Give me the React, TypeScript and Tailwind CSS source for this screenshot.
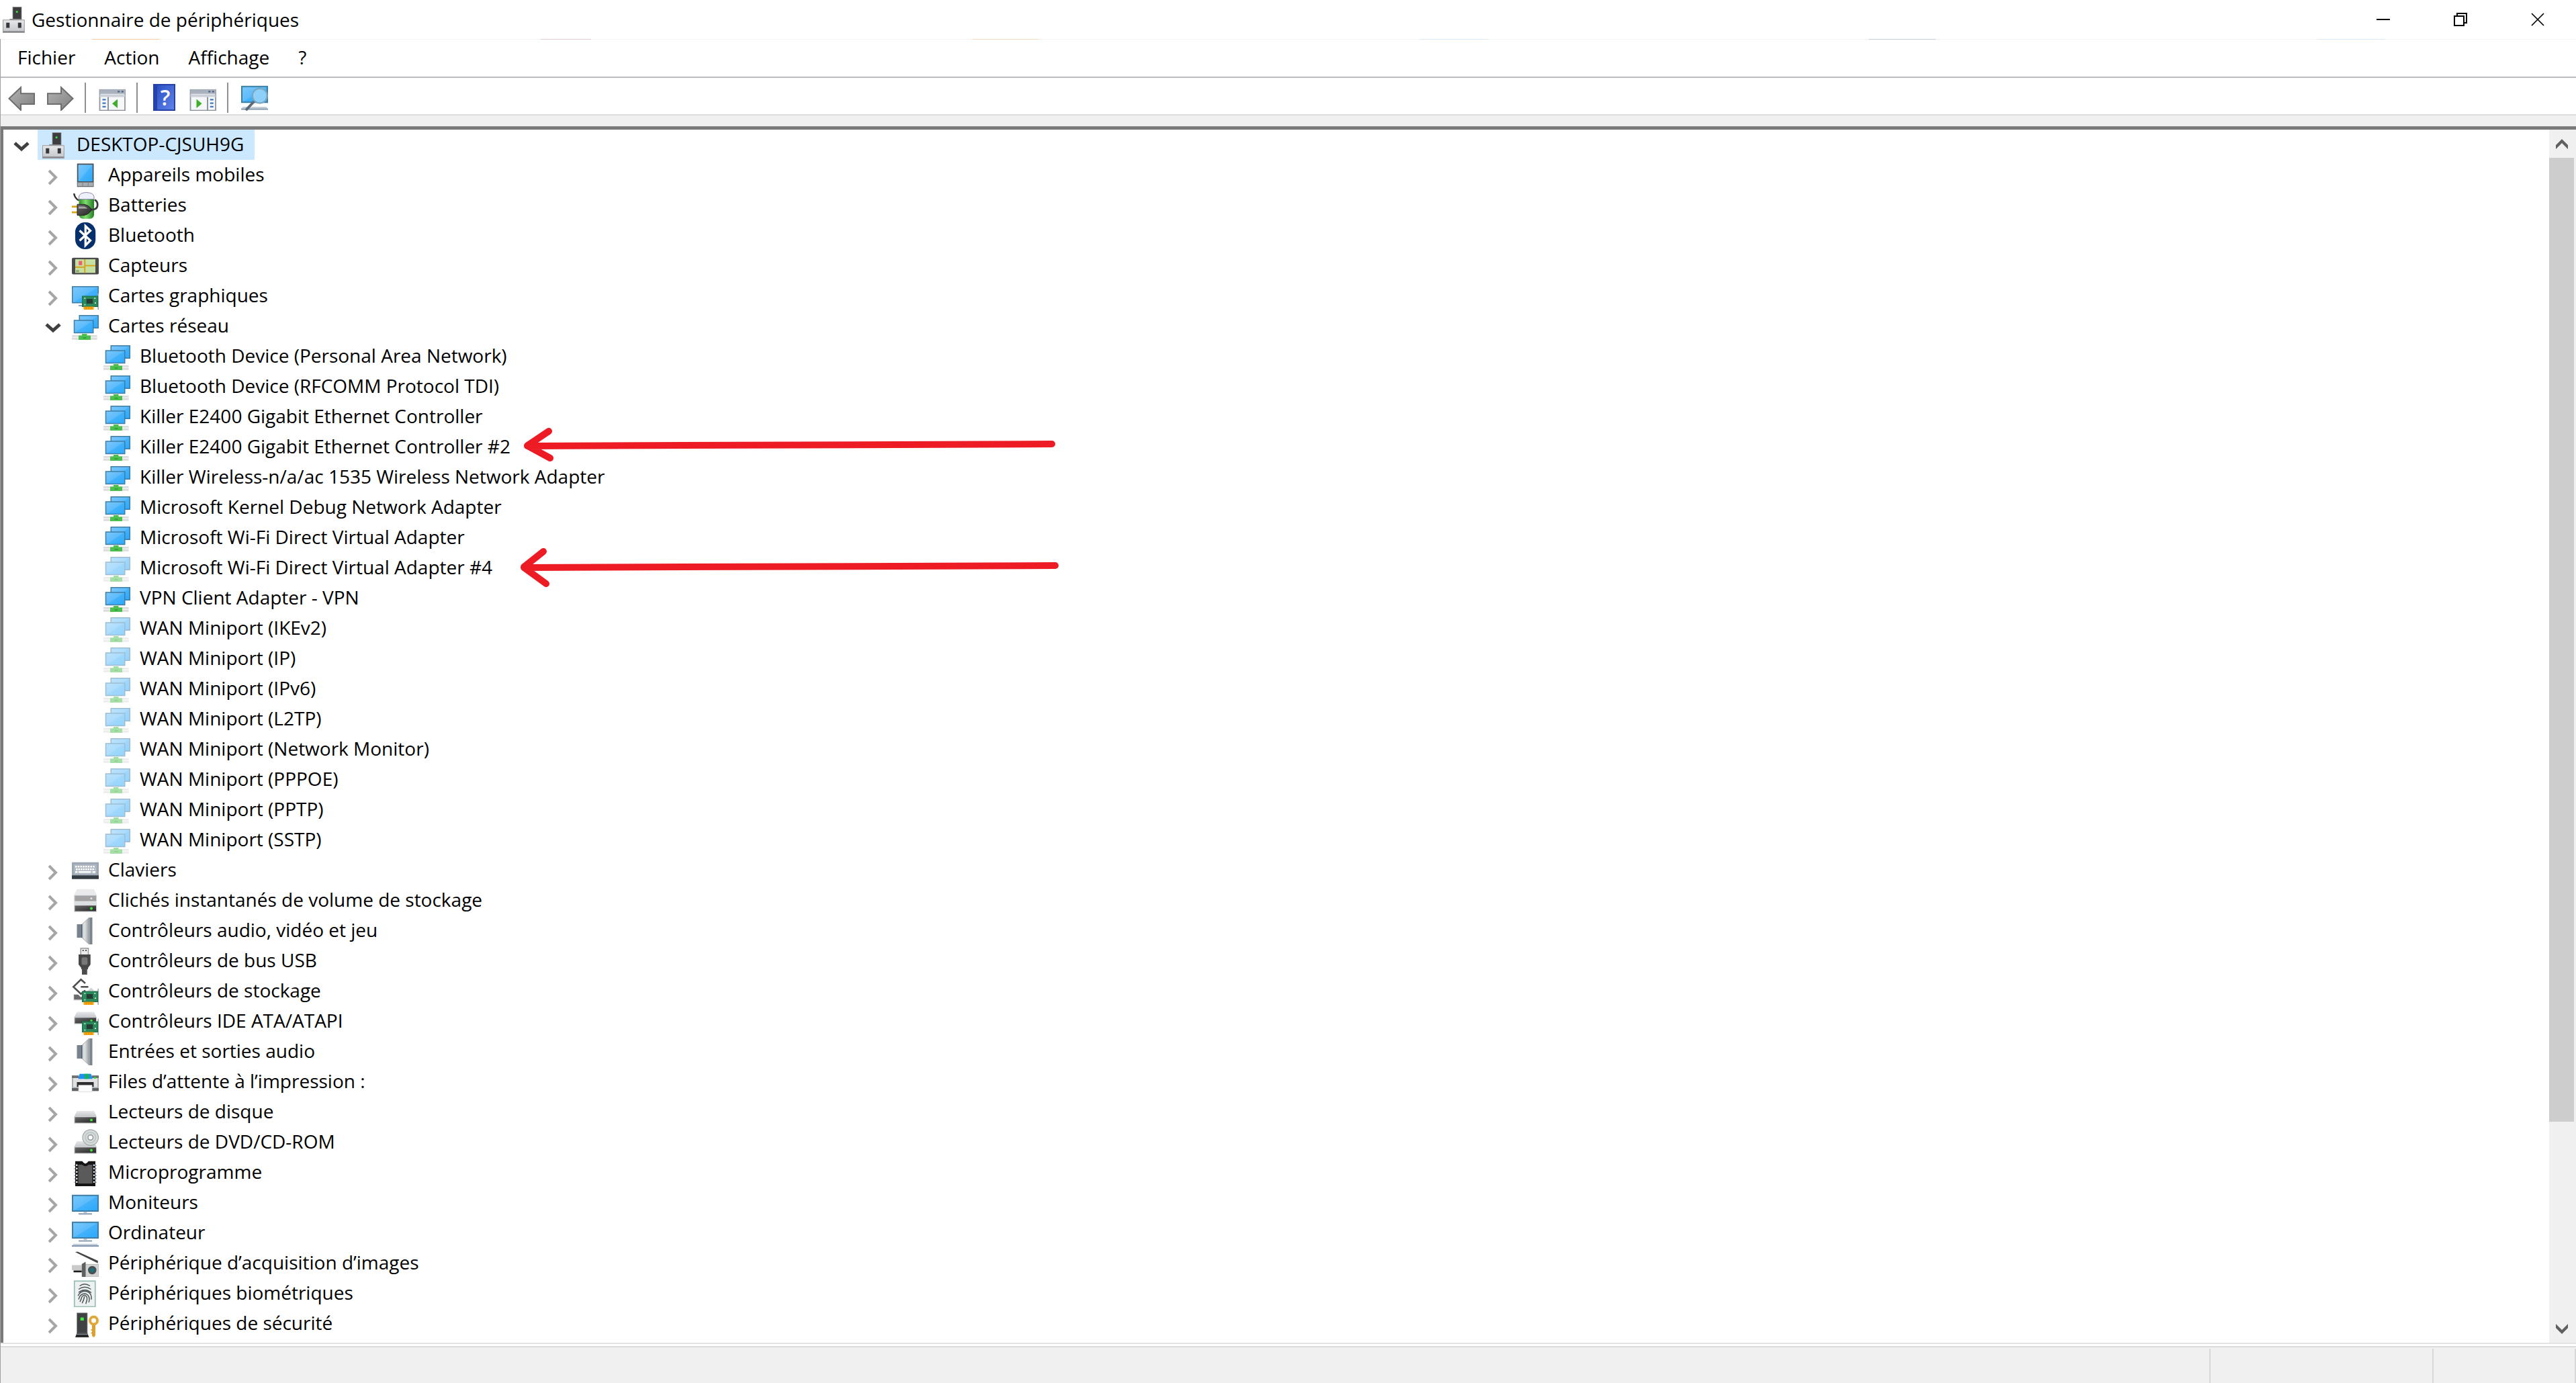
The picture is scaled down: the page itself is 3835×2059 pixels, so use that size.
import { useState } from "react";
import type { ReactNode } from "react";

type IconName =
  | "computer"
  | "mobile"
  | "battery"
  | "bluetooth"
  | "sensor"
  | "graphics"
  | "network"
  | "keyboard"
  | "volume"
  | "audio"
  | "usb"
  | "storage"
  | "ide"
  | "printer"
  | "disk"
  | "dvd"
  | "firmware"
  | "monitor"
  | "desktop"
  | "imaging"
  | "biometric"
  | "security";

interface Device {
  label: string;
  disabled?: boolean;
}

interface Category {
  label: string;
  icon: IconName;
  devices?: Device[];
}

const categories: Category[] = [
  { label: "Appareils mobiles", icon: "mobile" },
  { label: "Batteries", icon: "battery" },
  { label: "Bluetooth", icon: "bluetooth" },
  { label: "Capteurs", icon: "sensor" },
  { label: "Cartes graphiques", icon: "graphics" },
  {
    label: "Cartes réseau",
    icon: "network",
    devices: [
      { label: "Bluetooth Device (Personal Area Network)" },
      { label: "Bluetooth Device (RFCOMM Protocol TDI)" },
      { label: "Killer E2400 Gigabit Ethernet Controller" },
      { label: "Killer E2400 Gigabit Ethernet Controller #2" },
      { label: "Killer Wireless-n/a/ac 1535 Wireless Network Adapter" },
      { label: "Microsoft Kernel Debug Network Adapter" },
      { label: "Microsoft Wi-Fi Direct Virtual Adapter" },
      { label: "Microsoft Wi-Fi Direct Virtual Adapter #4", disabled: true },
      { label: "VPN Client Adapter - VPN" },
      { label: "WAN Miniport (IKEv2)", disabled: true },
      { label: "WAN Miniport (IP)", disabled: true },
      { label: "WAN Miniport (IPv6)", disabled: true },
      { label: "WAN Miniport (L2TP)", disabled: true },
      { label: "WAN Miniport (Network Monitor)", disabled: true },
      { label: "WAN Miniport (PPPOE)", disabled: true },
      { label: "WAN Miniport (PPTP)", disabled: true },
      { label: "WAN Miniport (SSTP)", disabled: true },
    ],
  },
  { label: "Claviers", icon: "keyboard" },
  { label: "Clichés instantanés de volume de stockage", icon: "volume" },
  { label: "Contrôleurs audio, vidéo et jeu", icon: "audio" },
  { label: "Contrôleurs de bus USB", icon: "usb" },
  { label: "Contrôleurs de stockage", icon: "storage" },
  { label: "Contrôleurs IDE ATA/ATAPI", icon: "ide" },
  { label: "Entrées et sorties audio", icon: "audio" },
  { label: "Files d’attente à l’impression :", icon: "printer" },
  { label: "Lecteurs de disque", icon: "disk" },
  { label: "Lecteurs de DVD/CD-ROM", icon: "dvd" },
  { label: "Microprogramme", icon: "firmware" },
  { label: "Moniteurs", icon: "monitor" },
  { label: "Ordinateur", icon: "desktop" },
  { label: "Périphérique d’acquisition d’images", icon: "imaging" },
  { label: "Périphériques biométriques", icon: "biometric" },
  { label: "Périphériques de sécurité", icon: "security" },
];

const menus = ["Fichier", "Action", "Affichage", "?"];

// Green expansion card used by several categories
const card = (
  <>
    <path d="M15.7 6.3V16" stroke="#a5a9ad" strokeWidth="0.7" />
    <rect x="6.2" y="8" width="9.2" height="6.2" fill="#2b8a5c" stroke="#1d6a46" strokeWidth="0.4" />
    <rect x="8.7" y="9.6" width="3.8" height="2.8" fill="#273c35" />
    <path d="M7.4 9.2h.7M7.4 13h.7M13.3 9.2h.8M13.6 12h.8" stroke="#cfe9da" strokeWidth="0.7" />
    <rect x="7" y="14.2" width="6" height="1.8" fill="#f6a40c" />
    <path d="M8.5 14.2V16M10 14.2V16M11.5 14.2V16" stroke="#d98400" strokeWidth="0.3" />
  </>
);

const drive = (
  <>
    <path d="M3 7.2h10.2l1.6 3.5H1.3z" fill="url(#light)" />
    <rect x="1.3" y="10.7" width="13.5" height="4" fill="#c9ccce" />
    <rect x="1.8" y="10.9" width="12.6" height="3.3" fill="url(#dark)" />
    <circle cx="11.6" cy="12.6" r="0.8" fill="#3bea3b" />
  </>
);

const drawings: Record<IconName, ReactNode> = {
  computer: (
    <>
      <rect x="7.2" y="0.6" width="5.2" height="8" fill="#3d3d3f" stroke="#8e8e8e" strokeWidth="0.3" />
      <rect x="9.1" y="2.9" width="1.1" height="1.1" fill="#3fe03f" />
      <path d="M5.3 7.6h7v1h-7z" fill="#8a8a8c" />
      <rect x="1.4" y="8.3" width="12.7" height="7.5" fill="url(#light)" stroke="#9a9a9e" strokeWidth="0.4" />
      <path d="M1.4 15.2h12.7" stroke="#8d8d92" strokeWidth="0.9" />
      <rect x="3.3" y="9.9" width="2" height="3.1" fill="#35373a" />
      <rect x="10.3" y="9.9" width="2" height="3.1" fill="#35373a" />
    </>
  ),
  mobile: (
    <>
      <rect x="3.1" y="1" width="9.9" height="13.9" fill="#4b5054" />
      <rect x="3.8" y="1.7" width="8.5" height="9.9" fill="url(#screen)" />
      <rect x="3.4" y="12.2" width="9.3" height="2.3" fill="#a7adb1" />
      <path d="M6.4 12.2v2.3M9.7 12.2v2.3" stroke="#7b8185" strokeWidth="0.4" />
    </>
  ),
  battery: (
    <>
      <rect x="4.2" y="1.2" width="9" height="14.7" rx="2.5" fill="url(#green)" />
      <path d="M4.2 4.2V2.8Q4.4 .4 8.7.2q4.3.2 4.5 2.6v1.4z" fill="#eef0fa" stroke="#8d8aa8" strokeWidth="0.4" />
      <path d="M1.3.8q.2 2.6 2.8 4.2" fill="none" stroke="#333" strokeWidth="1" />
      <path d="M11 10.4h1.8q2.5-.5 2.5-2.8 0-2.3-1.8-3" fill="none" stroke="#3a3a3a" strokeWidth="1.1" />
      <path d="M0 8.6h3.2M0 12h3.2" stroke="#d8a810" strokeWidth="1.1" />
      <path d="M3.2 7.3h4q3.2.6 4.6 3.1-1.4 2.8-4.6 3.4h-4z" fill="url(#dark)" stroke="#222" strokeWidth="0.4" />
      <path d="M4 8.6h3.2q1.4.4 2.2 1.2H4z" fill="#a9a9a9" />
    </>
  ),
  bluetooth: (
    <>
      <rect x="2" y="0" width="12.1" height="16" rx="5.8" fill="#06306b" />
      <path d="M4.6 4.9 11 10.8 8.1 13.7V2.2L11 5 4.6 10.9" fill="none" stroke="#fff" strokeWidth="1.3" />
    </>
  ),
  sensor: (
    <>
      <rect x="0" y="3.1" width="16" height="9.9" rx="0.8" fill="#4a4a4a" />
      <rect x="2" y="4" width="12" height="8.1" fill="#c6dfa2" />
      <path d="M2 8.7h5.7M7.7 4v8.1M7.7 7.8H14" stroke="#d6a520" strokeWidth="0.8" />
      <rect x="4.1" y="5" width="2" height="2.5" fill="#ef5d6a" />
      <rect x="2.5" y="10.4" width="1.8" height="1.3" fill="#8fa67a" />
    </>
  ),
  graphics: (
    <>
      <rect x="0.3" y="2.3" width="15.4" height="9.6" fill="url(#screen)" stroke="#3d7da6" strokeWidth="0.6" />
      <path d="M4 13.6h3" stroke="#8fa5bd" strokeWidth="0.8" />
      {card}
    </>
  ),
  network: (
    <>
      <rect x="4.5" y="1.5" width="11.2" height="7.4" fill="url(#screen)" stroke="#3d7da6" strokeWidth="0.6" />
      <rect x="1.4" y="4.4" width="11.3" height="7.4" fill="url(#screen)" stroke="#3d7da6" strokeWidth="0.6" />
      <rect x="0" y="13.2" width="15" height="2.7" fill="#dcdcdc" />
      <path d="M0 14.5h15" stroke="#f2f2f2" strokeWidth="0.6" />
      <path d="M6 12.4h3v1h2.2v2.6H4v-2.6h2z" fill="#4cc04e" />
      <path d="M6.6 14.8h2" stroke="#2f9a3a" strokeWidth="0.7" />
    </>
  ),
  keyboard: (
    <>
      <rect x="0" y="3.1" width="16" height="8" fill="#9ba7b3" />
      <rect x="1.2" y="4.3" width="13.6" height="5.9" fill="#aeb8c2" />
      <path d="M2 5.7h12" stroke="#fff" strokeWidth="1" strokeDasharray="1 .5" />
      <path d="M2.4 7.3h11.4" stroke="#fff" strokeWidth="1" strokeDasharray="1 .4" />
      <path d="M2 8.9h1.4M4 8.9h7.4M12.2 8.9h1.8" stroke="#fff" strokeWidth="1" />
      <rect x="0" y="10.9" width="16" height="2.2" fill="#333c44" />
    </>
  ),
  volume: (
    <>
      <path d="M3 1.1h10.2l1.6 3.6H1.3z" fill="#e9eaeb" />
      <rect x="1.3" y="4.7" width="13.5" height="3.9" fill="#cfd0d1" />
      <rect x="1.8" y="5" width="12.6" height="3.2" fill="#a3a3a3" />
      <circle cx="11.6" cy="6.6" r="0.6" fill="#e4e4e4" />
      <path d="M1.3 8.6h13.5v2.3H1.3z" fill="#dcdfe1" />
      <rect x="1.3" y="10.7" width="13.5" height="4" fill="#c9ccce" />
      <rect x="1.8" y="10.9" width="12.6" height="3.3" fill="url(#dark)" />
      <circle cx="11.6" cy="12.6" r="0.8" fill="#3bea3b" />
    </>
  ),
  audio: (
    <>
      <path d="M6 4 10.2.1v15.8L6 12z" fill="url(#cone)" stroke="#949ba1" strokeWidth="0.3" />
      <rect x="10" y="0" width="2.2" height="16" fill="#7d858c" />
      <path d="M10.4 0v16" stroke="#a4abb1" strokeWidth="0.6" />
      <rect x="3" y="4" width="3.1" height="8" fill="#76828e" />
      <path d="M5.9 4v8" stroke="#4d5862" strokeWidth="0.5" />
    </>
  ),
  usb: (
    <>
      <rect x="5.3" y="0.3" width="4.5" height="4" fill="#ececec" stroke="#9a9a9a" strokeWidth="0.6" />
      <path d="M6.3 1.6h.8M8 1.6h.8" stroke="#555" strokeWidth="0.8" />
      <path d="M4 4h7.1v6L9.6 12v.8H5.6V12L4 10z" fill="#474747" />
      <rect x="5.8" y="5.7" width="3.5" height="4.5" rx="0.8" fill="#777" />
      <rect x="6" y="12" width="3.1" height="4" fill="#4c4c4c" />
    </>
  ),
  storage: (
    <>
      <path d="M9 8l2.4-2.2 2 1.6z" fill="#cfd4da" />
      <path d="M1 9.6h5.4v3.8H1z" fill="#c9ccce" />
      <path d="M1.3 10h5v2.8h-5z" fill="#6a6a6a" />
      <path d="M7.6 3 5.4.9.9 5.3l4.5 4.6 2.2-2.2" fill="none" stroke="#fff" strokeWidth="2.2" />
      <path d="M8 3.2 5.4.9.9 5.3l4.5 4.2L8 7.4M5.3 5.3h4.5" fill="none" stroke="#4e4e4e" strokeWidth="1" />
      {card}
    </>
  ),
  ide: (
    <>
      <path d="M3 2.2h10.2l1.6 3.4H1.3z" fill="url(#light)" />
      <rect x="1.3" y="5.5" width="13.5" height="4" fill="#c9ccce" />
      <rect x="1.8" y="5.7" width="12.6" height="3.3" fill="url(#dark)" />
      <circle cx="11.6" cy="7.4" r="0.7" fill="#3bea3b" />
      {card}
    </>
  ),
  printer: (
    <>
      <path d="M0 4.1h16v9.2H0z" fill="#aeb1b3" />
      <path d="M0 4.1h4v1.5H0zM12 4.1h4v1.5h-4z" fill="#6c7072" />
      <path d="M0 11.6h4v1.7H0zM12 11.6h4v1.7h-4z" fill="#5e6264" />
      <path d="M.8 5.6h14.4v5.4H.8z" fill="#dfe1e2" />
      <path d="M4.6 3.1h6.8l.9 3H3.8z" fill="#1e90f0" />
      <rect x="7.6" y="3.1" width="2.6" height="3" fill="#16b060" />
      <rect x="13.2" y="5" width="1.2" height="1" fill="#35e035" />
      <rect x="3" y="8" width="10" height="2.9" fill="#2d2d2d" />
      <rect x="4" y="9.9" width="8" height="3.9" fill="#fbfbfb" stroke="#d5d5d5" strokeWidth="0.3" />
    </>
  ),
  disk: drive,
  dvd: (
    <>
      {drive}
      <circle cx="11.1" cy="5" r="4.7" fill="#d5dada" stroke="#a3abab" strokeWidth="0.5" />
      <circle cx="11.1" cy="5" r="3.1" fill="none" stroke="#b9c0c0" strokeWidth="0.5" />
      <circle cx="11.1" cy="5" r="1.5" fill="#fff" stroke="#8f9898" strokeWidth="0.6" />
    </>
  ),
  firmware: (
    <>
      <path d="M1.3 3.6h13.5M1.3 5.6h13.5M1.3 7.6h13.5M1.3 9.6h13.5M1.3 11.6h13.5M1.3 13.6h13.5" stroke="#9fb0c4" strokeWidth="0.7" />
      <path d="M2 1.1h4.2Q8 4 9.9 1.1H14V16H2z" fill="#151515" />
      <path d="M2.9 3v11.4M13.2 3v11.4" stroke="#dfe6ee" strokeWidth="0.9" strokeDasharray="1 1" />
      <path d="M3.8 3.2h2.4Q8 5 9.9 3.2h2.3v11.2H3.8z" fill="#5a5a5a" />
    </>
  ),
  monitor: (
    <>
      <rect x="0.4" y="3.5" width="15.2" height="9.3" fill="url(#screen)" stroke="#3d7da6" strokeWidth="0.8" />
      <path d="M7 13.6h2" stroke="#b9c5d2" strokeWidth="0.9" />
      <path d="M4 14.5h8" stroke="#94a6ba" strokeWidth="0.9" />
    </>
  ),
  desktop: (
    <>
      <rect x="0.4" y="1.5" width="15.2" height="9.3" fill="url(#screen)" stroke="#3d7da6" strokeWidth="0.8" />
      <path d="M7 11.6h2" stroke="#b9c5d2" strokeWidth="0.9" />
      <path d="M4 12.6h8" stroke="#94a6ba" strokeWidth="0.9" />
      <path d="M1 14.3h14l1 1.2H0z" fill="#c3ced9" />
      <path d="M0 15.6h16" stroke="#8196ad" strokeWidth="0.8" />
    </>
  ),
  imaging: (
    <>
      <path d="M1.9 1.2 3.5 1l12 5.4v1.5z" fill="#454545" />
      <rect x="0" y="9" width="7" height="3" fill="#c9c9c9" />
      <rect x="1" y="12.2" width="5" height="1.1" fill="#1c1c1c" />
      <rect x="6" y="8.5" width="10" height="7.5" fill="#d2d2d2" stroke="#a7a7a7" strokeWidth="0.3" />
      <path d="M6 8.3 8.2 7v9H6z" fill="#5f5f5f" />
      <circle cx="12.1" cy="12" r="2.5" fill="#4a4f52" />
      <circle cx="12.1" cy="12" r="1.3" fill="#1f6f78" />
    </>
  ),
  biometric: (
    <>
      <rect x="1.5" y="0.5" width="12.4" height="15.3" fill="#edf1f1" stroke="#98bdb4" strokeWidth="0.7" />
      <g fill="none" stroke="#4d5658" strokeWidth="0.6">
        <path d="M4.6 3.4q3-2.2 6.2 0M4 5.4q3.6-2.6 7.4 0M4 7.3q3.7-3 7.6.2" />
        <path d="M3.7 9.3q1.2-2.8 4.1-2.8 3.3.2 3.8 3.4v1.6M4 11.4q.8-3.4 3.8-3.4 2.4.4 2.6 3.2 0 1.2-.4 2M4.8 12.9q.8-1.6 1.1-2.9.6-1.2 1.8-1 1.6.4 1.3 2.6l-.7 2.5M6.1 13.7q1-1.8 1.4-4" />
      </g>
    </>
  ),
  security: (
    <>
      <rect x="3" y="1.5" width="6.2" height="11.8" fill="#3f4143" stroke="#8b8d8f" strokeWidth="0.3" />
      <rect x="5.1" y="4.2" width="2" height="1.8" fill="#3cf03c" />
      <path d="M3 13.3h6.2l1 2.7H2z" fill="#26282a" />
      <path d="M2.8 14.1h6.8" stroke="#9aa3a8" strokeWidth="0.5" />
      <path d="M12 8.5h2v6.3l-.8 1.2-1.2-.8z" fill="#dca02c" />
      <path d="M11.4 11.6h1M11.4 13.4h1" stroke="#dca02c" strokeWidth="0.8" />
      <circle cx="13" cy="6" r="2.2" fill="none" stroke="#e0a838" strokeWidth="1.6" />
    </>
  ),
};

function DeviceIcon({ name, faded }: { name: IconName; faded?: boolean }) {
  return (
    <svg
      className={faded ? "size-10 shrink-0 opacity-50" : "size-10 shrink-0"}
      viewBox="0 0 16 16"
      aria-hidden="true"
    >
      {drawings[name]}
    </svg>
  );
}

function Gradients() {
  return (
    <svg className="absolute size-0" aria-hidden="true">
      <defs>
        <linearGradient id="screen" x1="0" y1="0" x2="1" y2="1">
          <stop offset="0" stopColor="#7cc8fb" />
          <stop offset="0.5" stopColor="#5cbbfb" />
          <stop offset="0.52" stopColor="#43b2fb" />
          <stop offset="1" stopColor="#2ba8fb" />
        </linearGradient>
        <linearGradient id="light" x1="0" y1="0" x2="0" y2="1">
          <stop offset="0" stopColor="#e6e8ea" />
          <stop offset="1" stopColor="#c3c6c9" />
        </linearGradient>
        <linearGradient id="dark" x1="0" y1="0" x2="1" y2="1">
          <stop offset="0" stopColor="#686868" />
          <stop offset="1" stopColor="#262626" />
        </linearGradient>
        <linearGradient id="green" x1="0" y1="0" x2="1" y2="0">
          <stop offset="0" stopColor="#2f8f2c" />
          <stop offset="0.45" stopColor="#7fdc6e" />
          <stop offset="1" stopColor="#217a22" />
        </linearGradient>
        <linearGradient id="cone" x1="0" y1="0" x2="1" y2="0">
          <stop offset="0" stopColor="#c9cdd0" />
          <stop offset="0.4" stopColor="#dfe2e4" />
          <stop offset="1" stopColor="#979ea4" />
        </linearGradient>
        <linearGradient id="arrow" x1="0" y1="0" x2="1" y2="1">
          <stop offset="0" stopColor="#b4b4b4" />
          <stop offset="1" stopColor="#7f7f7f" />
        </linearGradient>
      </defs>
    </svg>
  );
}

function Chevron({ open }: { open: boolean }) {
  return (
    <svg className="size-10" viewBox="0 0 40 40" fill="none" aria-hidden="true">
      {open ? (
        <path d="M10 17l10 9 10-9" stroke="#404040" strokeWidth="5" />
      ) : (
        <path d="M14 13l10 10-10 10" stroke="#a6a6a6" strokeWidth="4" />
      )}
    </svg>
  );
}

function ToolButton({ label, children }: { label: string; children: ReactNode }) {
  return (
    <button type="button" aria-label={label} className="size-10">
      <svg className="size-10" viewBox="0 0 16 16" aria-hidden="true">
        {children}
      </svg>
    </button>
  );
}

function Separator() {
  return <div className="mr-[19px] ml-4 h-[45px] w-[2px] bg-[#8f8f8f]" />;
}

function TitleBar() {
  return (
    <header className="flex h-[58px] shrink-0 items-stretch justify-between bg-white">
      <div className="flex items-center gap-1.5 pl-px">
        <DeviceIcon name="computer" />
        <h1 className="text-[28px] leading-[40px]">Gestionnaire de périphériques</h1>
      </div>
      <div className="flex">
        <button type="button" aria-label="Réduire" className="flex w-[115px] items-center justify-center">
          <svg className="size-5" viewBox="0 0 20 20" aria-hidden="true">
            <path d="M0 10h20" stroke="#000" strokeWidth="2" />
          </svg>
        </button>
        <button type="button" aria-label="Restaurer" className="flex w-[115px] items-center justify-center">
          <svg className="size-5" viewBox="0 0 20 20" fill="none" stroke="#000" strokeWidth="2" aria-hidden="true">
            <path d="M1 5h14v14H1zM5 5V1h14v14h-4" />
          </svg>
        </button>
        <button type="button" aria-label="Fermer" className="flex w-[115px] items-center justify-center">
          <svg className="size-5" viewBox="0 0 20 20" aria-hidden="true">
            <path d="M1 1l18 18M19 1L1 19" stroke="#000" strokeWidth="1.7" />
          </svg>
        </button>
      </div>
    </header>
  );
}

// Thin line under the title bar, with a few tinted stretches
function TitleEdge() {
  return (
    <div className="flex h-px shrink-0 justify-between bg-[#f2f3f3] pr-[285px] pl-[136px]">
      <div className="w-[100px] bg-[#fccba4]" />
      <div className="w-[75px] bg-[#e3c9d0]" />
      <div className="w-[100px] bg-[#f8dcc0]" />
      <div className="w-[100px] bg-[#d9e9f5]" />
      <div className="w-[100px] bg-[#c3d2da]" />
      <div className="w-[100px] bg-[#d9e9f5]" />
    </div>
  );
}

function MenuBar() {
  return (
    <nav className="flex h-[57px] shrink-0 items-center gap-[43px] border-b-2 border-[#b8bcc0] bg-white pb-1 pl-[25px] text-[28px] leading-[40px]">
      {menus.map((menu) => (
        <button key={menu} type="button">
          {menu}
        </button>
      ))}
    </nav>
  );
}

function Toolbar() {
  return (
    <div role="toolbar" className="flex h-[56px] shrink-0 items-center border-b-2 border-[#dedede] bg-white pt-1 pl-[11px]">
      <ToolButton label="Précédent">
        <path d="M.6 8.7 7.6 2v3.7h8V12h-8v3.6z" fill="url(#arrow)" stroke="#6e6e6e" strokeWidth="0.8" />
      </ToolButton>
      <div className="w-[18px]" />
      <ToolButton label="Suivant">
        <path d="M15.4 8.7 8.4 2v3.7h-8V12h8v3.6z" fill="url(#arrow)" stroke="#6e6e6e" strokeWidth="0.8" />
      </ToolButton>
      <Separator />
      <ToolButton label="Afficher l’arborescence">
        <rect x="0.6" y="3.5" width="15" height="12.3" fill="#f6f7f8" stroke="#8d949d" strokeWidth="0.7" />
        <rect x="0.6" y="3.3" width="15" height="2.6" fill="#a9b1bd" />
        <path d="M11.3 4.5h1.2M13.5 4.5h1.2" stroke="#4b5f86" strokeWidth="0.9" />
        <path d="M.6 7h15" stroke="#ccd1d8" strokeWidth="1.6" />
        <path d="M5.6 7.8v8" stroke="#8d949d" strokeWidth="0.8" />
        <path d="M2.2 9.3h2M2.2 11.4h2M2.2 13.5h2" stroke="#3f78c0" strokeWidth="0.9" />
        <path d="M11.2 9v5.4L8 11.7z" fill="#3fae2a" />
      </ToolButton>
      <Separator />
      <button type="button" aria-label="Aide" className="flex size-10 items-center justify-center">
        <span className="h-10 w-[33px] border-2 border-l-[6px] border-[#2443a8] bg-linear-to-br from-[#2c50c4] to-[#5f83ea] text-center text-[32px] leading-[36px] font-semibold text-white">
          ?
        </span>
      </button>
      <div className="w-[18px]" />
      <ToolButton label="Propriétés">
        <rect x="0.6" y="3.5" width="15" height="12.3" fill="#f6f7f8" stroke="#8d949d" strokeWidth="0.7" />
        <rect x="0.6" y="3.3" width="15" height="2.6" fill="#a9b1bd" />
        <path d="M11.3 4.5h1.2M13.5 4.5h1.2" stroke="#4b5f86" strokeWidth="0.9" />
        <path d="M.6 7h15" stroke="#ccd1d8" strokeWidth="1.6" />
        <path d="M10.8 7.8v8" stroke="#8d949d" strokeWidth="0.8" />
        <path d="M12.3 9.3h2M12.3 11.4h2M12.3 13.5h2" stroke="#3f78c0" strokeWidth="0.9" />
        <path d="M4.2 9v5.4l3.2-2.7z" fill="#3fae2a" />
      </ToolButton>
      <Separator />
      <ToolButton label="Rechercher les modifications">
        <rect x="0.4" y="1.5" width="15.2" height="9.4" fill="url(#screen)" stroke="#3a7fa0" strokeWidth="0.8" />
        <path d="M1 13.6h14l1 1.2H0z" fill="#c3ced9" />
        <path d="M0 15h16" stroke="#8196ad" strokeWidth="0.7" />
        <path d="M2.8 15.6 7.8 10.3" stroke="#5d6a75" strokeWidth="1.6" />
        <circle cx="11.1" cy="7" r="4.4" fill="#8fd0fa" stroke="#79a6c0" strokeWidth="0.9" />
      </ToolButton>
    </div>
  );
}

function DeviceTree() {
  const [rootOpen, setRootOpen] = useState(true);
  const [opened, setOpened] = useState<string[]>(["Cartes réseau"]);

  const toggle = (label: string) => {
    setOpened((current) =>
      current.includes(label) ? current.filter((item) => item !== label) : [...current, label]
    );
  };

  return (
    <ul role="tree" className="min-w-0 flex-1 overflow-hidden whitespace-nowrap pl-[7px] text-[28px] leading-[40px]">
      <li role="treeitem" aria-expanded={rootOpen} aria-selected="true">
        <div className="flex h-[45px] items-center">
          <button type="button" aria-label="Développer" onClick={() => setRootOpen(!rootOpen)}>
            <Chevron open={rootOpen} />
          </button>
          <div className="ml-1 flex h-[45px] items-center gap-3.5 bg-[#cce8ff] pr-4 pl-1">
            <DeviceIcon name="computer" />
            <span className="pb-1">DESKTOP-CJSUH9G</span>
          </div>
        </div>
        {rootOpen && (
          <ul role="group" className="pl-[47px]">
            {categories.map((category) => {
              const open = opened.includes(category.label);
              return (
                <li key={category.label} role="treeitem" aria-expanded={open}>
                  <div className="flex h-[45px] items-center">
                    <button type="button" aria-label={category.label} onClick={() => toggle(category.label)}>
                      <Chevron open={open} />
                    </button>
                    <div className="ml-2 flex items-center gap-3.5">
                      <DeviceIcon name={category.icon} />
                      <span className="pb-1">{category.label}</span>
                    </div>
                  </div>
                  {open && category.devices && (
                    <ul role="group" className="pl-[95px]">
                      {category.devices.map((device) => (
                        <li key={device.label} role="treeitem" className="flex h-[45px] items-center gap-3.5">
                          <DeviceIcon name="network" faded={device.disabled} />
                          <span className="pb-1">{device.label}</span>
                        </li>
                      ))}
                    </ul>
                  )}
                </li>
              );
            })}
          </ul>
        )}
      </li>
    </ul>
  );
}

function ScrollBar() {
  return (
    <div className="flex w-10 shrink-0 flex-col bg-[#f0f0f0]">
      <button type="button" aria-label="Défiler vers le haut" className="flex h-[42px] w-[37px] items-center justify-center">
        <svg className="size-5" viewBox="0 0 20 20" aria-hidden="true">
          <path d="M1 12 10 3l9 9v6l-9-9-9 9z" fill="#606060" />
        </svg>
      </button>
      <div className="flex w-[37px] flex-1 flex-col">
        <div className="flex-5 bg-[#cdcdcd]" />
        <div className="flex-1" />
      </div>
      <button type="button" aria-label="Défiler vers le bas" className="flex h-[42px] w-[37px] items-center justify-center">
        <svg className="size-5" viewBox="0 0 20 20" aria-hidden="true">
          <path d="M1 9l9 9 9-9V3l-9 9-9-9z" fill="#606060" />
        </svg>
      </button>
    </div>
  );
}

// Hand drawn arrows pointing at the two duplicated adapters
function Arrows() {
  return (
    <svg
      className="pointer-events-none absolute top-0 left-0 h-[700px] w-[1600px]"
      viewBox="0 0 1600 700"
      fill="none"
      stroke="#ed1c24"
      strokeWidth="10"
      strokeLinecap="round"
      strokeLinejoin="round"
      aria-hidden="true"
    >
      <path d="M1561 468 780 471M812 449l-32 21.500M814 489l-34-18.500" />
      <path d="M1566 649 775 652M804 628l-29 23M808 676l-33-24" />
    </svg>
  );
}

export default function App() {
  return (
    <div className="flex h-screen flex-col bg-[#f0f0f0] font-['Open_Sans','Noto_Sans',sans-serif] text-black">
      <Gradients />
      <TitleBar />
      <div className="flex min-h-0 flex-1 flex-col border-l border-[#a0a0a0]">
        <TitleEdge />
        <MenuBar />
        <Toolbar />
        <main className="relative mt-4 flex min-h-0 flex-1 border-t-[5px] border-l-4 border-[#7a7a7a] bg-white">
          <DeviceTree />
          <ScrollBar />
          <Arrows />
        </main>
        <footer className="flex h-[60px] shrink-0 flex-col border-t-2 border-[#e3e3e3] bg-white pt-[3px]">
          <div className="flex flex-1 border-t-2 border-[#dcdcdc] bg-[#f0f0f0] pt-0.5">
            <div className="flex-1" />
            <div className="w-[332px] border-l-2 border-[#d9d9d9]" />
            <div className="w-[214px] border-x-2 border-[#d9d9d9]" />
          </div>
        </footer>
      </div>
    </div>
  );
}
